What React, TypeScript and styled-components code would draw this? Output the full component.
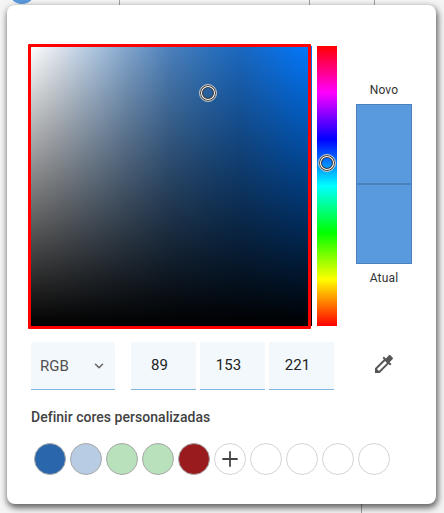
import styled, { createGlobalStyle } from "styled-components";
import { ChevronDown, Plus } from "lucide-react";

const CURRENT = "#5999dd";

const GlobalStyle = createGlobalStyle`
  html, body {
    margin: 0;
    padding: 0;
    overflow: hidden;
  }
  body {
    font-family: Roboto, "Liberation Sans", sans-serif;
  }
`;

const Sheet = styled.div`
  position: relative;
  width: 444px;
  height: 513px;
  overflow: hidden;
  background: #f4f4f4;
`;

const SheetLine = styled.div<{ $left: number; $bottom?: boolean }>`
  position: absolute;
  ${(p) => (p.$bottom ? "bottom: 0;" : "top: 0;")}
  left: ${(p) => p.$left}px;
  width: 1px;
  height: 12px;
  background: #a0a0a0;
`;

const Avatar = styled.div`
  position: absolute;
  left: 9px;
  top: -22px;
  width: 26px;
  height: 26px;
  border-radius: 50%;
  background: ${CURRENT};
`;

const Dialog = styled.div`
  position: absolute;
  left: 7px;
  top: 5px;
  width: 429px;
  height: 499px;
  box-sizing: border-box;
  padding: 41px 0 0 23px;
  background: #fff;
  border-radius: 8px;
  box-shadow: 1px 3px 6px 1px rgba(0, 0, 0, 0.6);
`;

const PickerRow = styled.div`
  display: flex;
  align-items: flex-start;
`;

const Canvas = styled.div`
  position: relative;
  width: 282px;
  height: 280px;
  background:
    linear-gradient(to top, #000, rgba(0, 0, 0, 0)),
    linear-gradient(
      to right,
      #fff 0%,
      #dde5ee 10%,
      #a5bfdc 25%,
      #7fa3cb 35%,
      #4b80bb 50%,
      #2a70bd 65%,
      #1a68c0 75%,
      #0078ff 100%
    );
`;

const CanvasOutline = styled.div`
  position: absolute;
  left: -2px;
  top: -2px;
  width: 283px;
  height: 285px;
  box-sizing: border-box;
  border: 3px solid #ff0000;
  border-radius: 1px;
`;

const Thumb = styled.div<{ $x: number; $y: number }>`
  position: absolute;
  left: ${(p) => p.$x}px;
  top: ${(p) => p.$y}px;
  width: 18px;
  height: 18px;
  box-sizing: border-box;
  margin: -9px 0 0 -9px;
  border-radius: 50%;
  border: 1px solid #c8c8c8;
  box-shadow: inset 0 0 0 1px #333, inset 0 0 0 2px #fff, inset 0 0 0 3px #333;
`;

const HueBar = styled.div`
  position: relative;
  width: 20px;
  height: 280px;
  margin-left: 5px;
  background: linear-gradient(
    to bottom,
    #f00 0%,
    #f0f 16.67%,
    #00f 33.33%,
    #0ff 50%,
    #0f0 66.67%,
    #ff0 83.33%,
    #f00 100%
  );
`;

const PreviewColumn = styled.div`
  display: flex;
  flex-direction: column;
  align-items: center;
  width: 56px;
  margin: 36px 0 0 19px;
`;

const PreviewLabel = styled.div`
  font-size: 12px;
  line-height: 16px;
  letter-spacing: 0.2px;
  color: #333;
  margin: 0 0 6px;
`;

const PreviewSwatch = styled.div`
  width: 56px;
  height: 80px;
  box-sizing: border-box;
  background: ${CURRENT};
  border: 1px solid #4b80b8;
`;

const PreviewLabelBelow = styled(PreviewLabel)`
  margin: 6px 0 0;
`;

const InputRow = styled.div`
  display: flex;
  align-items: flex-start;
  margin: 16px 0 0 1px;
`;

const ModeSelect = styled.div`
  display: flex;
  align-items: center;
  justify-content: space-between;
  width: 84px;
  height: 48px;
  box-sizing: border-box;
  padding: 0 9px;
  margin-right: 16px;
  background: #f3f8fd;
  border-bottom: 1px solid #82b4d9;
  border-radius: 4px 4px 0 0;
  font-size: 15px;
  color: #505050;
`;

const ChannelFields = styled.div`
  display: flex;
  gap: 4px;
`;

const ChannelField = styled.div`
  width: 65px;
  height: 48px;
  box-sizing: border-box;
  padding-right: 8px;
  text-align: center;
  line-height: 46px;
  background: #f3f8fd;
  border-bottom: 1px solid #82b4d9;
  font-size: 15px;
  color: #222;
`;

const DropperButton = styled.div`
  display: flex;
  width: 24px;
  height: 24px;
  margin: 10px 0 0 38px;
  color: #555;
`;

const SectionTitle = styled.div`
  margin: 18px 0 0 1px;
  font-size: 14px;
  line-height: 18px;
  font-weight: 500;
  letter-spacing: 0.03px;
  color: #424242;
`;

const SwatchRow = styled.div`
  display: flex;
  gap: 4px;
  margin: 17px 0 0 4px;
`;

const Swatch = styled.div<{ $color?: string }>`
  display: flex;
  align-items: center;
  justify-content: center;
  width: 32px;
  height: 32px;
  box-sizing: border-box;
  border-radius: 50%;
  background: ${(p) => p.$color ?? "#fff"};
  border: 1px solid ${(p) => (p.$color ? "#a9a9a9" : "#d4d4d4")};
  color: #444;
`;

const customColors = ["#2a66ab", "#b8cce4", "#b9e1bb", "#b9e1bb", "#9a1b1e"];

export default function App() {
  return (
    <>
      <GlobalStyle />
      <Sheet>
        <SheetLine $left={119} />
        <SheetLine $left={309} />
        <SheetLine $left={374} />
        <SheetLine $left={361} $bottom />
        <Avatar />
        <Dialog>
          <PickerRow>
            <Canvas>
              <CanvasOutline />
              <Thumb $x={178} $y={47} />
            </Canvas>
            <HueBar>
              <Thumb $x={10} $y={117} />
            </HueBar>
            <PreviewColumn>
              <PreviewLabel>Novo</PreviewLabel>
              <PreviewSwatch />
              <PreviewSwatch />
              <PreviewLabelBelow>Atual</PreviewLabelBelow>
            </PreviewColumn>
          </PickerRow>
          <InputRow>
            <ModeSelect>
              RGB
              <ChevronDown size={14} strokeWidth={2.6} color="#666" />
            </ModeSelect>
            <ChannelFields>
              <ChannelField>89</ChannelField>
              <ChannelField>153</ChannelField>
              <ChannelField>221</ChannelField>
            </ChannelFields>
            <DropperButton>
              <svg width="24" height="24" viewBox="0 0 24 24" fill="currentColor">
                <path d="M20.71 5.63l-2.34-2.34c-.39-.39-1.02-.39-1.41 0l-3.12 3.12-1.93-1.91-1.41 1.41 1.42 1.42L3 16.25V21h4.75l8.92-8.92 1.42 1.42 1.41-1.41-1.92-1.92 3.12-3.12c.4-.4.4-1.03.01-1.42zM6.92 19L5 17.08l8.06-8.06 1.92 1.92L6.92 19z" />
              </svg>
            </DropperButton>
          </InputRow>
          <SectionTitle>Definir cores personalizadas</SectionTitle>
          <SwatchRow>
            {customColors.map((color, i) => (
              <Swatch key={i} $color={color} />
            ))}
            <Swatch>
              <Plus size={24} strokeWidth={1.8} />
            </Swatch>
            <Swatch />
            <Swatch />
            <Swatch />
            <Swatch />
          </SwatchRow>
        </Dialog>
      </Sheet>
    </>
  );
}
